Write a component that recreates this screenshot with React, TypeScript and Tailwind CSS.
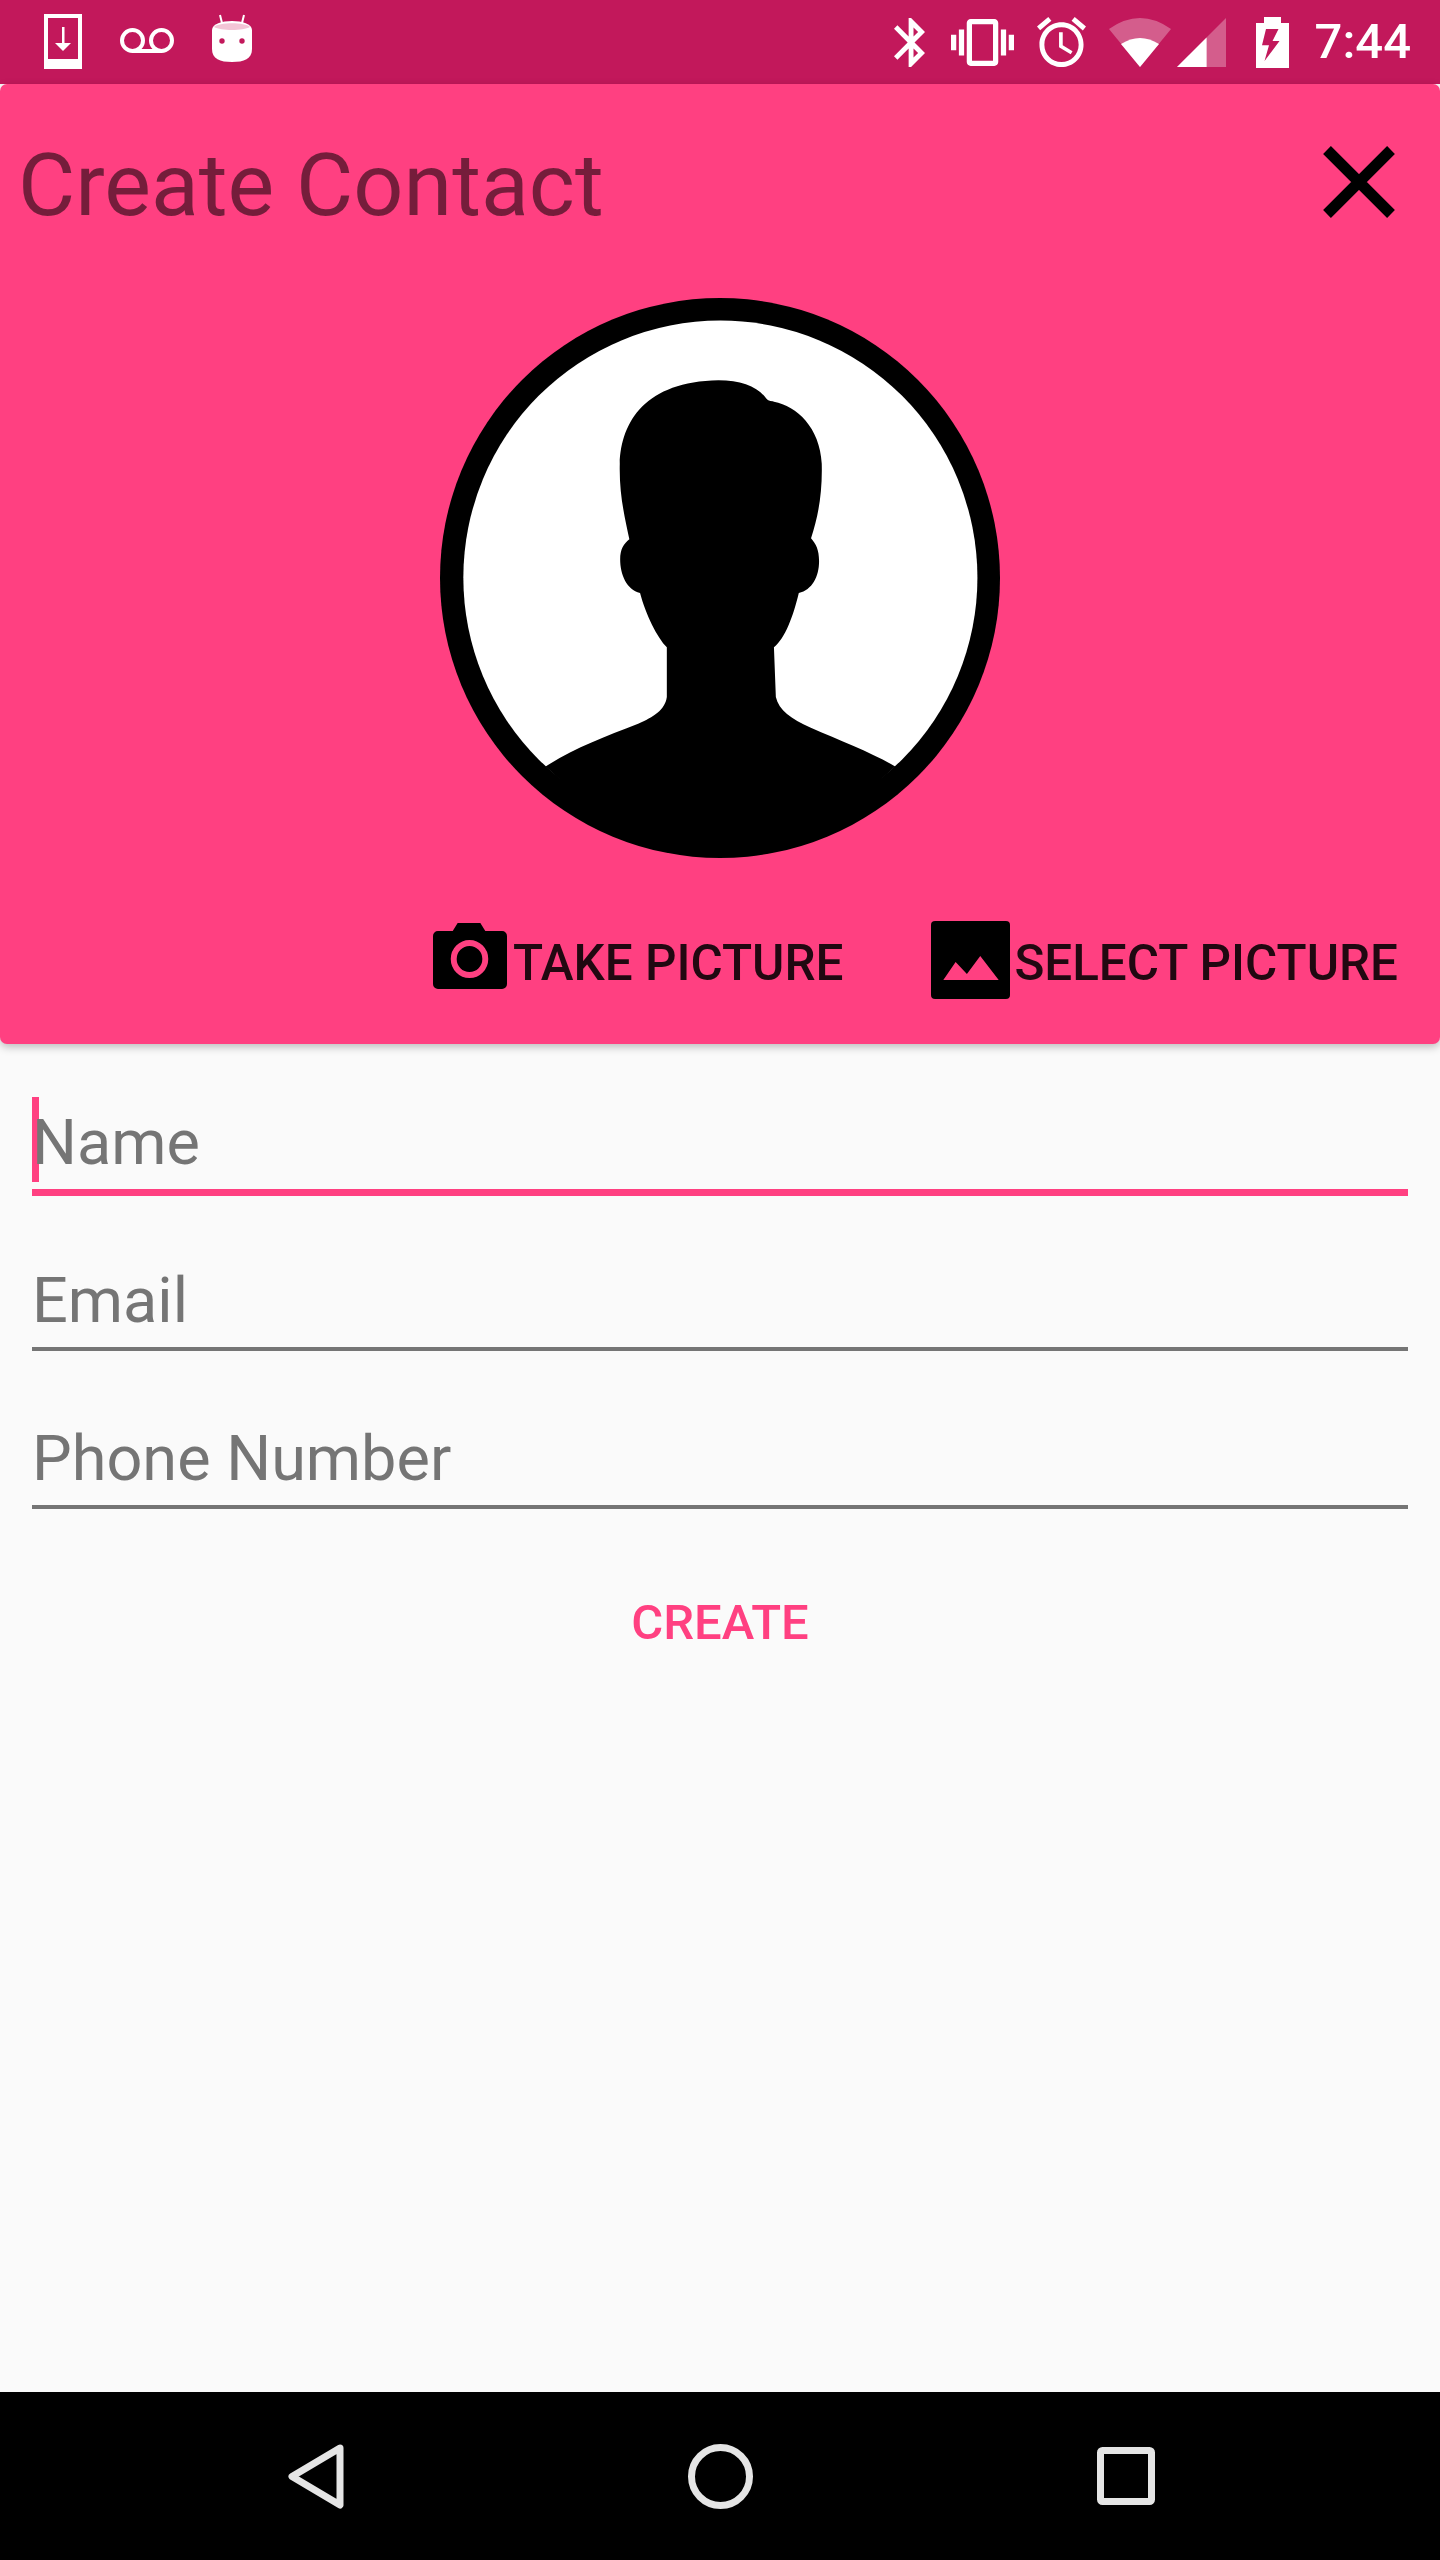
const roboto = "font-['Roboto',sans-serif]";

const DownloadIcon = () => (
  <svg width="38" height="55" viewBox="0 0 38 55" className="mt-[-1px]">
    <path fillRule="evenodd" fill="#fff" d="M0 0h38v55H0zM4 4v41h30V4z" />
    <path fill="#fff" d="M18 13h2.500v16H27l-8 8-8-8h7z" />
  </svg>
);

const VoicemailIcon = () => (
  <svg width="54" height="25" viewBox="0 0 54 25" className="mt-[-3px]">
    <circle cx="12.500" cy="12.500" r="10.500" fill="none" stroke="#fff" strokeWidth="4" />
    <circle cx="41.500" cy="12.500" r="10.500" fill="none" stroke="#fff" strokeWidth="4" />
    <path d="M12 23h30" stroke="#fff" strokeWidth="4" />
  </svg>
);

const MarshmallowIcon = () => (
  <svg width="40" height="48" viewBox="0 0 40 48" className="mt-[-8px]">
    <path d="M8 1l2.500 10M32 1l-2.500 10" stroke="#fff" strokeWidth="2" />
    <path fill="#fff" d="M0 16C0 10 10 7 20 7s20 3 20 9v19c0 10-8 13-20 13S0 45 0 35z" />
    <path fill="#f3c5d6" d="M2 13c5-5 31-5 36 0-7 4-29 4-36 0z" />
    <circle cx="10" cy="27" r="2.700" fill="#c2185b" />
    <circle cx="30" cy="27" r="2.700" fill="#c2185b" />
  </svg>
);

const BluetoothIcon = () => (
  <svg width="31" height="49" viewBox="5 2 12.71 20" preserveAspectRatio="none" fill="#fff">
    <path d="M17.71 7.71L12 2h-1v7.59L6.41 5 5 6.41 10.59 12 5 17.59 6.41 19 11 14.41V22h1l5.71-5.71-4.3-4.29 4.3-4.29zM13 5.83l1.88 1.88L13 9.59V5.83zm1.88 10.46L13 18.17v-3.76l1.88 1.88z" />
  </svg>
);

const VibrateIcon = () => (
  <svg width="63" height="47" viewBox="0 3 24 18" preserveAspectRatio="none" fill="#fff">
    <path d="M0 15h2V9H0v6zm3 2h2V7H3v10zm19-8v6h2V9h-2zm-3 8h2V7h-2v10zM16.5 3h-9C6.67 3 6 3.67 6 4.5v15c0 .83.67 1.5 1.5 1.5h9c.83 0 1.5-.67 1.5-1.5v-15c0-.83-.67-1.5-1.5-1.5zM16 19H8V5h8v14z" />
  </svg>
);

const AlarmIcon = () => (
  <svg width="49" height="50" viewBox="2 1.86 20 20.14" preserveAspectRatio="none" fill="#fff">
    <path d="M22 5.72l-4.6-3.86-1.29 1.53 4.6 3.86L22 5.72zM7.88 3.39L6.6 1.86 2 5.71l1.29 1.53 4.59-3.85zM12.5 8H11v6l4.75 2.85.75-1.23-4-2.37V8zM12 4c-4.97 0-9 4.03-9 9s4.03 9 9 9c4.97 0 9-4.03 9-9s-4.03-9-9-9zm0 16c-3.87 0-7-3.13-7-7s3.13-7 7-7 7 3.13 7 7-3.13 7-7 7z" />
  </svg>
);

const WifiIcon = () => (
  <svg width="62" height="49" viewBox="0 0 62 49" fill="#fff">
    <path opacity="0.3" d="M0 11Q31-11 62 11L31 49z" />
    <path d="M12 26Q31 14 50 26L31 49z" />
  </svg>
);

const SignalIcon = () => (
  <svg width="49" height="49" viewBox="0 0 49 49" fill="#fff">
    <path opacity="0.3" d="M0 49L49 0v49z" />
    <path d="M0 49l29.600-29.600V49z" />
  </svg>
);

const BatteryIcon = () => (
  <svg width="33" height="51" viewBox="0 0 33 51">
    <path fill="#fff" d="M8 0h17v6h8v45H0V6h8z" />
    <path fill="#c2185b" d="M10 12h12.500l-6 12h7L8.500 44 13 28.300H6z" />
  </svg>
);

const CloseIcon = () => (
  <svg width="72" height="72" viewBox="0 0 72 72" className="mt-[11px]">
    <path d="M4 4l64 64M68 4L4 68" stroke="#000" strokeWidth="11" />
  </svg>
);

const Avatar = () => (
  <svg width="560" height="560" viewBox="52 47 1464 1464" className="mx-auto">
    <circle cx="784" cy="779" r="732" fill="#000" />
    <circle cx="785" cy="778" r="672" fill="#fff" />
    <path
      fill="#000"
      d="M328 1272C400 1225 480 1195 570 1160C610 1142 640 1125 645 1090L645 960C620 935 590 875 575 818C540 810 523 770 523 730C523 705 532 690 547 678C535 620 520 560 522 480C525 370 590 265 780 262C840 262 885 280 905 310C912 318 918 316 925 318C985 330 1045 385 1050 480C1052 560 1040 620 1022 675C1035 690 1043 705 1043 735C1043 775 1025 810 990 818C975 880 955 935 925 960L930 1090C938 1125 970 1147 1020 1170C1100 1205 1190 1240 1242 1272L1100 1400L785 1480L470 1400Z"
    />
  </svg>
);

const CameraIcon = () => (
  <svg width="74" height="66" viewBox="0 0 75 66" preserveAspectRatio="none" className="mt-[2px]">
    <path d="M25 0h23l5 8h17a5 5 0 0 1 5 5v48a5 5 0 0 1-5 5H5a5 5 0 0 1-5-5V13a5 5 0 0 1 5-5h15z" fill="#000" />
    <circle cx="37" cy="36" r="16" fill="none" stroke="#ff4081" strokeWidth="6" />
  </svg>
);

const PictureIcon = () => (
  <svg width="79" height="78" viewBox="0 0 77 78" preserveAspectRatio="none">
    <rect width="77" height="78" rx="4" fill="#000" />
    <path d="M12 59l12-18 11 12 13-18 18 24z" fill="#ff4081" />
  </svg>
);

const BackIcon = () => (
  <svg width="56" height="65" viewBox="0 0 56 65">
    <path d="M52 4L4 32.500L52 61z" fill="none" stroke="#e5e5e5" strokeWidth="7" strokeLinejoin="round" />
  </svg>
);

const HomeIcon = () => (
  <svg width="65" height="65" viewBox="0 0 65 65">
    <circle cx="32.500" cy="32.500" r="29" fill="none" stroke="#e5e5e5" strokeWidth="7" />
  </svg>
);

const RecentIcon = () => (
  <svg width="58" height="58" viewBox="0 0 58 58">
    <rect x="3.500" y="3.500" width="51" height="51" rx="2" fill="none" stroke="#e5e5e5" strokeWidth="7" />
  </svg>
);

const Field = ({ label, active, className }: { label: string; active?: boolean; className: string }) => (
  <div className={`relative mx-8 ${className}`}>
    {active && <div className="absolute left-0 top-[-3px] w-[7px] h-[85px] bg-[#ff4081]" />}
    <div className="relative h-[84px] text-[63px] leading-[86px] text-[#757575]">{label}</div>
    <div className={active ? "mt-[5px] h-[7px] bg-[#ff4081]" : "mt-[5px] h-1 bg-[#757575]"} />
  </div>
);

export default function App() {
  return (
    <div className={`flex flex-col w-[1440px] h-[2560px] bg-[#fafafa] overflow-hidden ${roboto}`}>
      <div className="flex items-center shrink-0 h-[84px] pl-[44px] pr-[29px] bg-[#c2185b]">
        <div className="flex items-center gap-[38px]">
          <DownloadIcon />
          <VoicemailIcon />
          <MarshmallowIcon />
        </div>
        <div className="flex items-center ml-auto">
          <BluetoothIcon />
          <div className="ml-[26px]"><VibrateIcon /></div>
          <div className="ml-[23px]"><AlarmIcon /></div>
          <div className="ml-[23px]"><WifiIcon /></div>
          <div className="ml-[6px]"><SignalIcon /></div>
          <div className="ml-[30px]"><BatteryIcon /></div>
          <span className="ml-[26px] text-[49px] leading-[56px] font-medium text-white">7:44</span>
        </div>
      </div>

      <div className="shrink-0 h-[960px] rounded-[7px] bg-[#ff4081] shadow-[0_3px_8px_rgba(0,0,0,0.25)]">
        <div className="flex items-start justify-between h-[214px] pt-[51px] pl-[18px] pr-[45px]">
          <h1 className="text-[88px] leading-[100px] font-normal text-black/54">Create Contact</h1>
          <CloseIcon />
        </div>
        <Avatar />
        <div className="flex items-start justify-end mt-[63px] pr-[42px]">
          <div className="flex items-start gap-[6px] mr-[88px]">
            <CameraIcon />
            <span className="mt-[14px] text-[49.4px] leading-[56px] font-medium text-black/87">TAKE PICTURE</span>
          </div>
          <div className="flex items-start gap-1">
            <PictureIcon />
            <span className="mt-[14px] text-[49.4px] leading-[56px] font-medium text-black/87">SELECT PICTURE</span>
          </div>
        </div>
      </div>

      <div className="flex flex-col pt-[56px]">
        <Field label="Name" active className="mb-[62px]" />
        <Field label="Email" className="mb-[65px]" />
        <Field label="Phone Number" className="mb-[86px]" />
        <div className="text-center text-[49px] leading-[56px] font-medium text-[#ff4081]">CREATE</div>
      </div>

      <div className="flex items-center shrink-0 h-[168px] mt-auto pl-[288px] gap-[344px] bg-black">
        <BackIcon />
        <HomeIcon />
        <RecentIcon />
      </div>
    </div>
  );
}
